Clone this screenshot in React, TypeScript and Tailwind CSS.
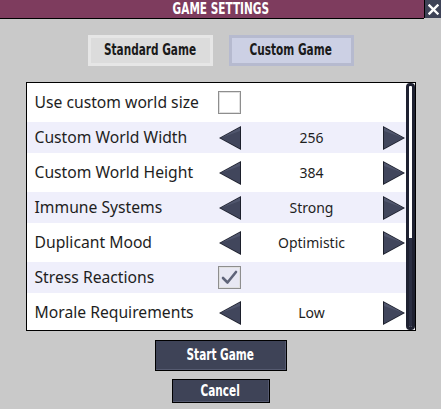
import React from "react";

const LeftArrow = () => (
  <svg width="24" height="26" viewBox="0 0 24 26" className="block">
    <polygon points="1,13 23,1 23,25" fill="#1c1f2b" />
    <polygon points="2.5,13 22,2.5 22,23.5" fill="#41465c" />
    <polygon points="2.5,13 22,2.5 22,6" fill="#5a6078" opacity="0.6" />
  </svg>
);

const RightArrow = () => (
  <svg width="24" height="26" viewBox="0 0 24 26" className="block">
    <polygon points="23,13 1,1 1,25" fill="#1c1f2b" />
    <polygon points="21.5,13 2,2.5 2,23.5" fill="#41465c" />
    <polygon points="2,2.5 21.5,13 2,6" fill="#5a6078" opacity="0.6" />
  </svg>
);

type Row =
  | { label: string; kind: "check"; checked: boolean }
  | { label: string; kind: "cycle"; value: string };

const rows: Row[] = [
  { label: "Use custom world size", kind: "check", checked: false },
  { label: "Custom World Width", kind: "cycle", value: "256" },
  { label: "Custom World Height", kind: "cycle", value: "384" },
  { label: "Immune Systems", kind: "cycle", value: "Strong" },
  { label: "Duplicant Mood", kind: "cycle", value: "Optimistic" },
  { label: "Stress Reactions", kind: "check", checked: true },
  { label: "Morale Requirements", kind: "cycle", value: "Low" },
];

const gameFont = {
  fontFamily: '"DejaVu Sans Condensed", "DejaVu Sans", sans-serif',
};

const GameText = ({ children }: { children: React.ReactNode }) => (
  <span
    className="inline-block scale-x-[0.78] whitespace-nowrap text-[15px] font-bold leading-none"
    style={gameFont}
  >
    {children}
  </span>
);

export default function App() {
  return (
    <div className="w-[441px] h-[409px] bg-[#c9c9c9] flex flex-col items-center overflow-hidden">
      {/* Title bar */}
      <div className="relative w-full h-[19px] shrink-0">
        <div className="h-[18px] w-[424px] bg-[#7e3c5e] border-b border-black box-content" />
        <div className="absolute inset-0 flex items-center justify-center text-white">
          <GameText>GAME SETTINGS</GameText>
        </div>
        <div className="absolute right-0 top-0 w-[17px] h-[18px] bg-[#3e4357] border-l border-black flex items-center justify-center">
          <svg width="11" height="11" viewBox="0 0 11 11">
            <path d="M1.5 1.5 L9.5 9.5 M9.5 1.5 L1.5 9.5" stroke="#ffffff" strokeWidth="2.4" strokeLinecap="square" />
          </svg>
        </div>
      </div>

      {/* Tabs */}
      <div className="mt-[16px] flex gap-[16px]">
        <div className="w-[125px] h-[31px] bg-[#e6e6e6] p-[3px]">
          <div className="w-full h-full bg-[#dcdcdc] flex items-center justify-center text-[#1a1a1a]">
            <GameText>Standard Game</GameText>
          </div>
        </div>
        <div className="w-[125px] h-[31px] bg-[#b6bacf] p-[3px]">
          <div className="w-full h-full bg-[#ccd0e4] flex items-center justify-center text-[#1a1a1a]">
            <GameText>Custom Game</GameText>
          </div>
        </div>
      </div>

      {/* Panel */}
      <div className="mt-[16px] w-[390px] h-[249px] bg-white border border-black flex relative">
        <div className="flex flex-col w-[379px] pt-[2px]">
          {rows.map((r, i) => (
            <div key={r.label} className="h-[35px] py-[2px]">
              <div
                className={`h-full flex items-center ${i % 2 === 1 ? "bg-[#efeffb]" : ""}`}
              >
                <div
                  className="w-[191px] pl-[8px] text-[15.7px] text-[#1e1e1e] leading-none"
                  style={{ fontFamily: '"Noto Sans", sans-serif' }}
                >
                  {r.label}
                </div>
                {r.kind === "check" ? (
                  <div
                    className={`w-[23px] h-[23px] border border-[#8e8e8e] ${
                      r.checked ? "bg-[#e8e8f3]" : "bg-white"
                    } flex items-center justify-center shadow-[inset_0_0_0_1px_#e0e0e0]`}
                  >
                    {r.checked && (
                      <svg width="19" height="17" viewBox="0 0 19 17">
                        <path
                          d="M3 9 L7.5 13.5 L16 3"
                          stroke="#5f6479"
                          strokeWidth="2.6"
                          fill="none"
                          strokeLinecap="round"
                          strokeLinejoin="round"
                        />
                      </svg>
                    )}
                  </div>
                ) : (
                  <div className="flex items-center w-[188px]">
                    <LeftArrow />
                    <div
                      className="flex-1 text-center text-[14px] text-[#1e1e1e] leading-none"
                      style={{ fontFamily: '"Noto Sans", sans-serif' }}
                    >
                      {r.value}
                    </div>
                    <RightArrow />
                  </div>
                )}
              </div>
            </div>
          ))}
        </div>
        {/* Scrollbar */}
        <div className="w-[9px] h-[247px] rounded-t-[4px] rounded-b-[4px] border-[3px] border-[#1e2131] bg-white flex flex-col overflow-hidden">
          <div className="h-[152px]" />
          <div className="flex-1 bg-[#2a2e42]" />
        </div>
      </div>

      {/* Buttons */}
      <div className="mt-[9px] w-[132px] h-[31px] bg-[#3e4357] border border-black flex items-center justify-center text-white shadow-[inset_-1px_-1px_0_#555a70]">
        <GameText>Start Game</GameText>
      </div>
      <div className="mt-[8px] w-[98px] h-[24px] bg-[#3e4357] border border-black flex items-center justify-center text-white shadow-[inset_-1px_-1px_0_#555a70]">
        <GameText>Cancel</GameText>
      </div>
    </div>
  );
}
